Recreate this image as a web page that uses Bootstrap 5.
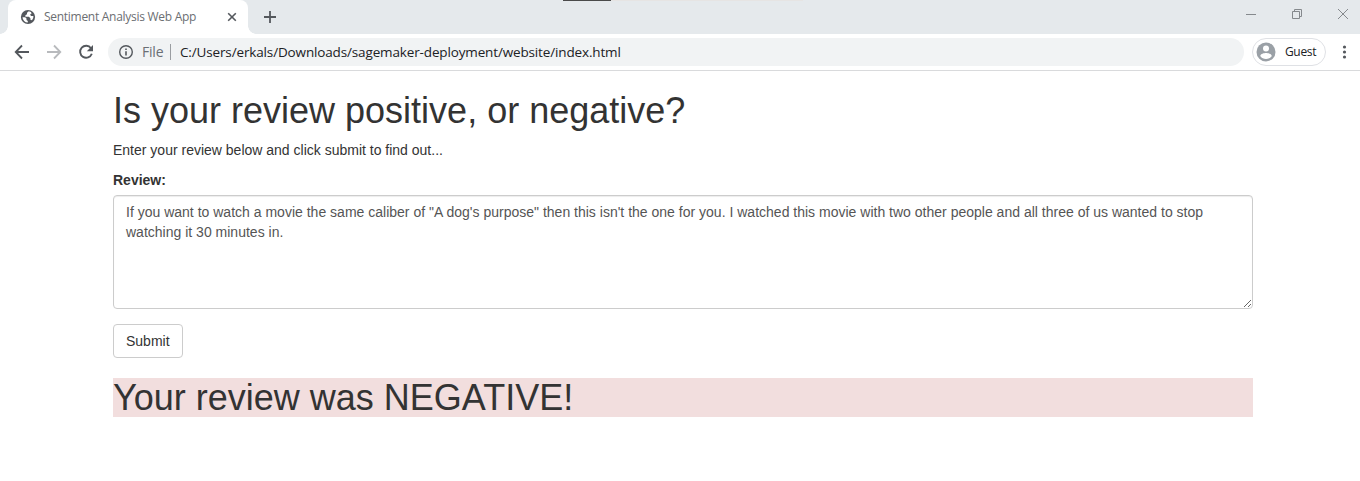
<!DOCTYPE html>
<html lang="en">
<head>
<meta charset="utf-8">
<title>Sentiment Analysis Web App</title>
<link href="https://cdn.jsdelivr.net/npm/bootstrap@5.3.0/dist/css/bootstrap.min.css" rel="stylesheet">
<style>
body{font:14px/20px "Liberation Sans",Arial,sans-serif;color:#333;background:#fff;overflow:hidden}
svg{display:block;flex:none}
.chrome{font-family:"Open Sans","Noto Sans",sans-serif;height:71px;border-bottom:1px solid #d9dadc}
.strip{height:34px;background:#e5e9ec;padding-left:8px}
.tab{width:240px;height:34px;background:#fff;border-radius:8px 8px 0 0;padding:0 8px 0 12px}
.tab::before,.tab::after{content:"";position:absolute;bottom:0;width:8px;height:8px}
.tab::before{left:-8px;background:radial-gradient(circle at 0 0,transparent 7.5px,#fff 8px)}
.tab::after{right:-8px;background:radial-gradient(circle at 100% 0,transparent 7.5px,#fff 8px)}
.tab-title{font-size:12px;color:#6b6e72;margin-left:8px;width:180px;letter-spacing:-.28px}
.loader{left:563px;top:0;width:240px;height:1px;background:#e6e4e3}
.loader i{display:block;width:48px;height:1px;background:#4a4a4a}
.tools{height:36px;padding-left:14px;color:#54585d}
.omni{width:1136px;height:28px;border-radius:14px;background:#f1f3f4;margin-left:14px;padding-left:10px;color:#202124}
.omni .scheme{width:21px;color:#6b6f74;margin-left:8px;letter-spacing:-.2px}
.omni .sep{width:1px;height:16px;background:#9a9da1;margin:0 9px 0 7px}
.omni .url{font-size:13.5px;letter-spacing:-.144px}
.guest{width:74px;height:28px;border:1px solid #dfe1e5;border-radius:14px;margin-left:8px;padding-left:3px;font-size:12px;color:#202124}
.guest span{margin-left:9px;letter-spacing:-.35px}
.page{width:1140px;margin-left:113px;padding-top:20px}
.page h1{font-size:36px;line-height:39px;font-weight:500;color:#333}
.review{height:114px;padding:6px 12px;font-size:14px;line-height:20px;color:#555;border:1px solid #ccc;border-radius:4px;box-shadow:inset 0 1px 1px rgba(0,0,0,.075);resize:vertical;letter-spacing:.006px}
.submit{height:34px;padding:6px 12px;font-size:14px;line-height:20px;color:#333;background:#fff;border:1px solid #ccc;border-radius:4px}
.verdict{background:#f2dede}
</style>
</head>
<body>
<header class="chrome">
  <div class="strip d-flex align-items-center position-relative">
    <div class="tab d-flex align-items-center position-relative">
      <svg width="16" height="16" viewBox="0 0 16 16"><circle cx="8" cy="8" r="7.1" fill="#54585d"/><path d="M8.8 2.2 7 3.7v1.6L5.400 6.300v1.500h3.500l1.500 1.500v1.400l1.600.6a5.500 5.500 0 0 0 1.400-4.400h-2.200L10 5.800l1.600-1.400-.7-1.300zM2.500 8.200a5.500 5.500 0 0 0 5.300 5.300v-1.600l-1.300-1V9.500L5.200 8.200z" fill="#fff"/></svg>
      <span class="tab-title text-nowrap">Sentiment Analysis Web App</span>
      <svg width="16" height="16" viewBox="0 0 16 16" stroke="#54585d" stroke-width="1.6"><path d="m4.200 4.200 7.600 7.600M11.800 4.200l-7.600 7.600"/></svg>
    </div>
    <svg class="ms-3" width="14" height="14" viewBox="0 0 14 14" stroke="#54585d" stroke-width="1.8"><path d="M6 1v12M0 7h12"/></svg>
    <div class="loader position-absolute"><i></i></div>
    <svg class="ms-auto" width="114" height="28" viewBox="0 0 114 28" fill="none" stroke="#85898d"><path d="M0 11.500h10M46.500 8.500h7v7h-7zM48.500 8.500v-2h7v7h-2M92 6l10 10M102 6 92 16"/></svg>
  </div>
  <div class="tools d-flex align-items-center">
    <svg width="16" height="16" viewBox="0 0 16 16" fill="none" stroke="currentColor" stroke-width="1.8"><path d="M15 8H2M8 1.500 1.700 8 8 14.500"/></svg>
    <svg style="margin-left:16px" width="16" height="16" viewBox="0 0 16 16" fill="none" stroke="#b8babd" stroke-width="1.800"><path d="M1 8h13M8 1.500 14.300 8 8 14.500"/></svg>
    <svg style="margin-left:16px" width="16" height="16" viewBox="0 0 16 16" fill="none" stroke="currentColor" stroke-width="1.900"><path d="M13 4.200A6 6 0 1 0 13.800 9.800"/><path d="M15 1v6.200H8.800z" fill="currentColor" stroke="none"/></svg>
    <div class="omni d-flex align-items-center">
      <svg width="16" height="16" viewBox="0 0 16 16"><circle cx="8" cy="8" r="6.300" fill="none" stroke="#54585d" stroke-width="1.400"/><path d="M7.200 4.400h1.600V6H7.200zM7.200 7.200h1.600v4.400H7.200z" fill="#54585d"/></svg>
      <span class="scheme">File</span><span class="sep"></span>
      <span class="url text-nowrap">C:/Users/erkals/Downloads/sagemaker-deployment/website/index.html</span>
    </div>
    <div class="guest d-flex align-items-center">
      <svg width="20" height="20" viewBox="0 0 20 20"><circle cx="10" cy="10" r="9.500" fill="#9aa0a6"/><circle cx="10" cy="6.600" r="3" fill="#fff"/><path d="M4.200 14c.4-2.100 3.800-2.900 5.800-2.900s5.400.8 5.800 2.900a7.200 7.200 0 0 1-11.600 0z" fill="#fff"/></svg>
      <span>Guest</span>
    </div>
    <svg style="margin-left:16px" width="5" height="16" viewBox="0 0 5 16" fill="currentColor"><circle cx="2.500" cy="3" r="1.600"/><circle cx="2.500" cy="8" r="1.600"/><circle cx="2.500" cy="13" r="1.600"/></svg>
  </div>
</header>
<main class="page">
  <h1 style="margin-bottom:10px">Is your review positive, or negative?</h1>
  <p style="margin-bottom:10px">Enter your review below and click submit to find out...</p>
  <form>
    <label class="d-block fw-bold" style="margin-bottom:5px" for="review">Review:</label>
    <textarea class="form-control review" id="review" spellcheck="false">If you want to watch a movie the same caliber of "A dog's purpose" then this isn't the one for you. I watched this movie with two other people and all three of us wanted to stop watching it 30 minutes in.</textarea>
    <button type="button" class="btn submit" style="margin-top:15px">Submit</button>
  </form>
  <h1 class="verdict" style="margin-top:20px">Your review was NEGATIVE!</h1>
</main>
<script src="https://cdn.jsdelivr.net/npm/bootstrap@5.3.0/dist/js/bootstrap.bundle.min.js"></script>
</body>
</html>
